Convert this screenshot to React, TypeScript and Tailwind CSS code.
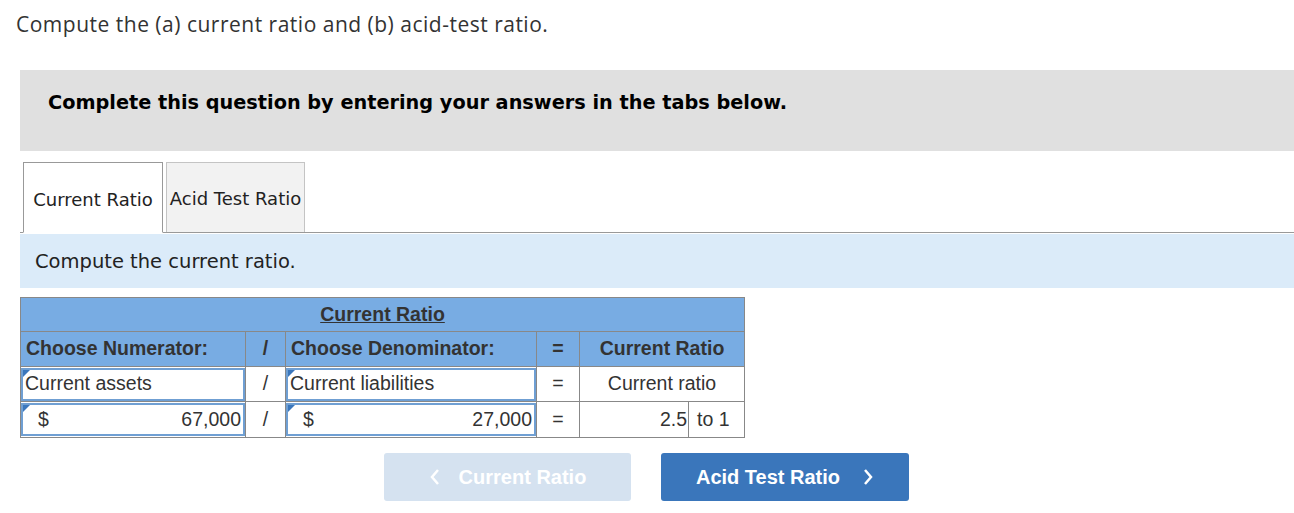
import React from "react";

const Corner = () => (
  <span className="absolute left-0 top-0 h-0 w-0 border-l-[7px] border-b-[7px] border-l-[#3b77bc] border-b-transparent" />
);

const Field = ({ children, className = "" }: { children: React.ReactNode; className?: string }) => (
  <div
    className={`relative h-[33px] border-2 border-[#6f9fd3] bg-white flex items-center ${className}`}
  >
    <Corner />
    {children}
  </div>
);

export default function App() {
  return (
    <div className="bg-white w-[1294px] h-[513px] text-[#222]">
      <p className="pl-[16px] pt-[10px] text-[21px] tracking-[0.5px] leading-[28px] font-['Open_Sans',sans-serif] text-[#333]">
        Compute the (a) current ratio and (b) acid-test ratio.
      </p>

      <div className="ml-[20px] mt-[32px] h-[81px] bg-[#e0e0e0] pl-[28px] pt-[21px]">
        <span className="font-['DejaVu_Sans',sans-serif] font-bold text-[19.3px] leading-[24px] text-black">
          Complete this question by entering your answers in the tabs below.
        </span>
      </div>

      <div className="ml-[20px] mt-[11px] flex items-end gap-[3px] pl-[3px] border-b border-[#999] font-['DejaVu_Sans',sans-serif] text-[18px]">
        <div className="w-[140px] h-[71px] -mb-px bg-white border border-[#999] border-b-white flex items-center justify-center pt-[3px]">
          Current Ratio
        </div>
        <div className="w-[139px] h-[70px] bg-[#f2f2f2] border border-[#c4c4c4] border-b-0 flex items-center justify-center pt-[2px]">
          Acid Test Ratio
        </div>
      </div>

      <div className="ml-[20px] mt-px h-[54px] bg-[#dbebf9] flex items-center pl-[15px] pt-[2px] font-['DejaVu_Sans',sans-serif] text-[19.5px]">
        Compute the current ratio.
      </div>

      <table className="ml-[20px] mt-[9px] border-collapse font-['Liberation_Sans',Arial,sans-serif] text-[19.5px] text-[#333]">
        <tbody>
          <tr className="h-[34px] bg-[#78ace3]">
            <th colSpan={6} className="border border-[#888] font-bold text-center">
              <span className="underline">Current Ratio</span>
            </th>
          </tr>
          <tr className="h-[35px] bg-[#78ace3] font-bold">
            <td className="w-[225px] border border-[#888] pl-[5px]">Choose Numerator:</td>
            <td className="w-[40px] border border-[#888] text-center">/</td>
            <td className="w-[251px] border border-[#888] pl-[5px]">Choose Denominator:</td>
            <td className="w-[43px] border border-[#888] text-center">=</td>
            <td colSpan={2} className="w-[165px] border border-[#888] text-center">Current Ratio</td>
          </tr>
          <tr className="h-[35px]">
            <td className="border border-[#888] p-0">
              <Field className="pl-[2px]">Current assets</Field>
            </td>
            <td className="border border-[#888] text-center">/</td>
            <td className="border border-[#888] p-0">
              <Field className="pl-[2px]">Current liabilities</Field>
            </td>
            <td className="border border-[#888] text-center">=</td>
            <td colSpan={2} className="border border-[#888] text-center">Current ratio</td>
          </tr>
          <tr className="h-[36px]">
            <td className="border border-[#888] p-0">
              <Field className="justify-between pl-[15px] pr-[2px]">
                <span>$</span>
                <span>67,000</span>
              </Field>
            </td>
            <td className="border border-[#888] text-center">/</td>
            <td className="border border-[#888] p-0">
              <Field className="justify-between pl-[15px] pr-[2px]">
                <span>$</span>
                <span>27,000</span>
              </Field>
            </td>
            <td className="border border-[#888] text-center">=</td>
            <td className="w-[109px] border border-[#888] text-right pr-[1px]">2.5</td>
            <td className="w-[56px] border border-[#888] pl-[8px]">to 1</td>
          </tr>
        </tbody>
      </table>

      <div className="mt-[15px] flex gap-[30px] pl-[384px] font-['Liberation_Sans',Arial,sans-serif] font-bold text-[20px] text-white">
        <div className="w-[247px] h-[48px] rounded-[3px] bg-[#d5e2f0] flex items-center justify-center gap-[18px]">
          <svg width="12" height="18" viewBox="0 0 12 18" fill="none" stroke="white" strokeWidth="2.5">
            <path d="M9 2 L3 9 L9 16" />
          </svg>
          <span>Current Ratio</span>
        </div>
        <div className="w-[248px] h-[48px] rounded-[3px] bg-[#3a76bb] flex items-center justify-center gap-[22px]">
          <span>Acid Test Ratio</span>
          <svg width="12" height="18" viewBox="0 0 12 18" fill="none" stroke="white" strokeWidth="2.5">
            <path d="M3 2 L9 9 L3 16" />
          </svg>
        </div>
      </div>
    </div>
  );
}
